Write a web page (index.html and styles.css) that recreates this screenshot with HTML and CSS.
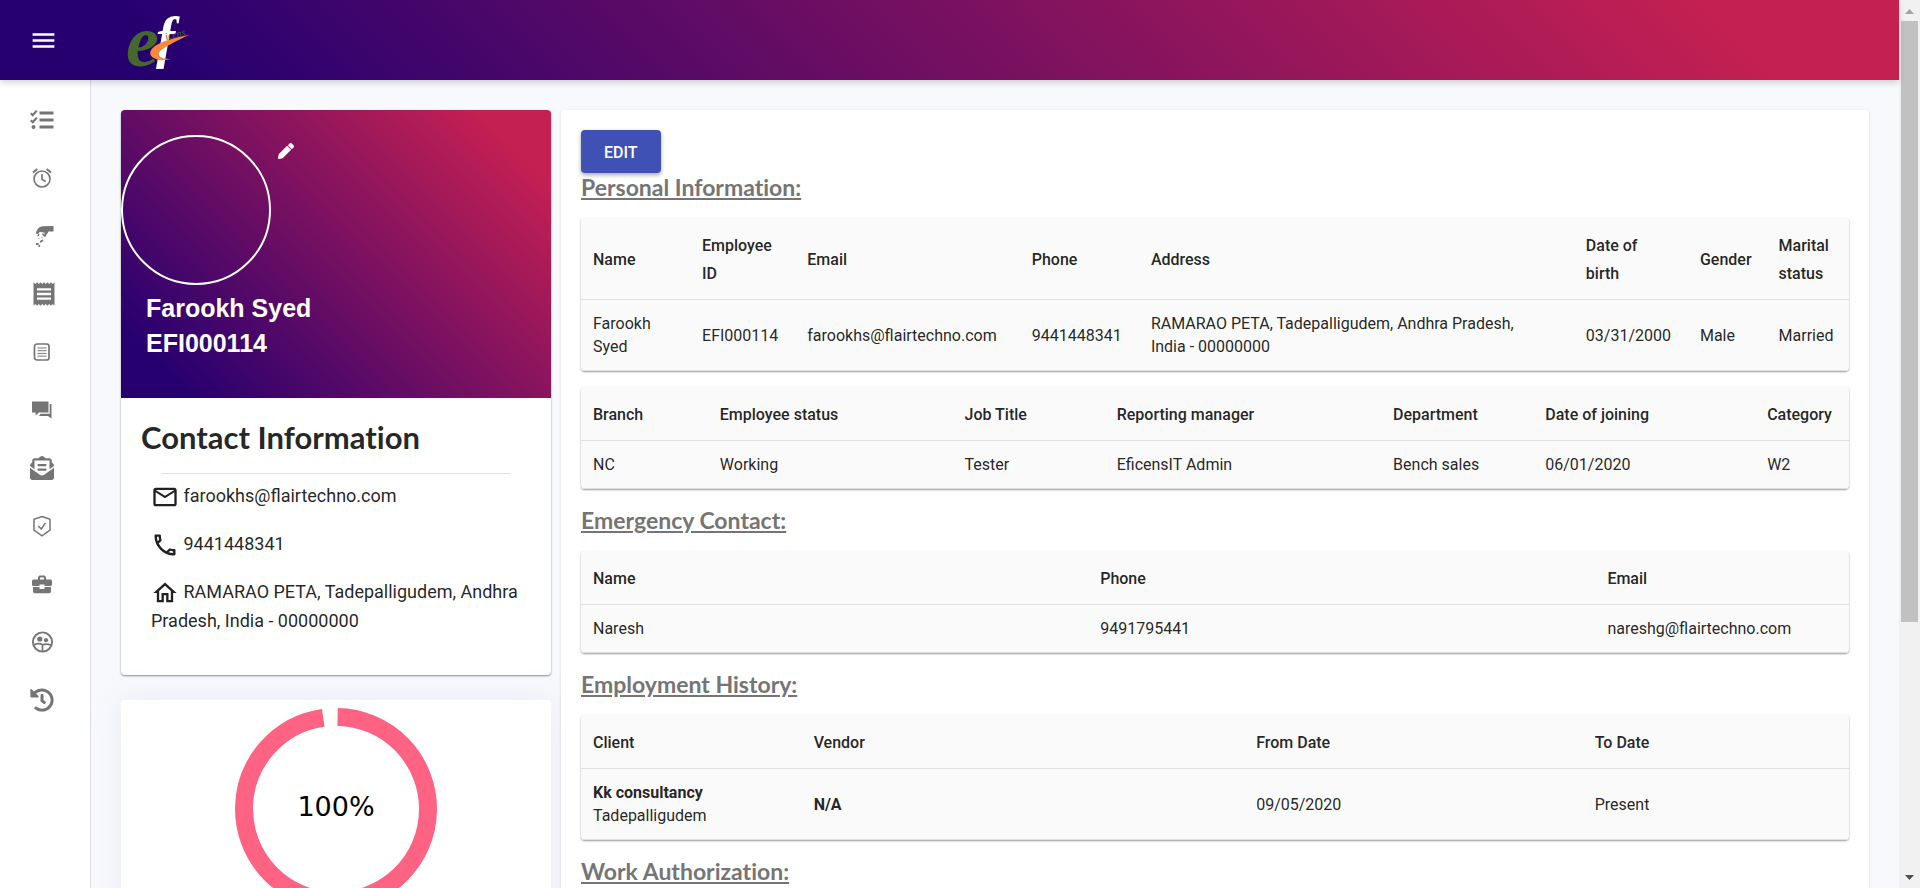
FILE: index.html
```html
<!DOCTYPE html>
<html lang="en">
<head>
<meta charset="utf-8">
<title>Employee profile</title>
<link rel="stylesheet" href="styles.css">
</head>
<body>
<div class="window">
  <div class="app">
    <header class="topbar">
      <button class="menu-button" type="button" aria-label="Open menu">
        <svg viewBox="0 0 24 24" width="29" height="29" fill="currentColor"><path d="M3 18h18v-2H3v2zm0-5h18v-2H3v2zm0-7v2h18V6H3z"/></svg>
      </button>
      <svg class="logo" viewBox="0 0 66 54" width="66" height="54" role="img" aria-label="eficens">
        <text class="logo-e" x="0" y="53">e</text>
        <text class="logo-f" x="30" y="44">f</text>
        <text class="logo-rest" x="40" y="27" transform="rotate(-14 40 27)">icens</text>
        <path fill="#f58a3c" d="M64 22C51 24 36 28 29 33c-7 5-6 11 1 13 5 2 10 1 15 0-6 0-11-1-12-4-1-4 5-7 12-11 6-3 12-7 19-9z"/>
      </svg>
    </header>
    <div class="shell">
      <nav class="sidebar" aria-label="Main">
        <a href="#tasks" aria-label="Tasks"><svg viewBox="0 0 24 24" width="24" height="24"><g fill="currentColor"><path d="M9.500 3.500h14v3h-14zM9.500 10.500h14v3h-14zM9.500 17.500h14v3h-14z"/><circle cx="3.500" cy="19" r="2"/></g><path fill="none" stroke="currentColor" stroke-width="2.200" d="M.8 5.200l2 2 4-4.600M.8 12.200l2 2 4-4.600"/></svg></a>
        <a href="#attendance" aria-label="Attendance"><svg viewBox="0 0 24 24" width="24" height="24" fill="none" stroke="currentColor" stroke-width="1.600"><circle cx="12" cy="13" r="8"/><path d="M12 8v5.300l3.600 2.200"/><path stroke-width="2" d="M3 6.500l4.400-3.600M21 6.500l-4.400-3.600"/></svg></a>
        <a href="#payroll" aria-label="Payroll"><svg viewBox="0 0 24 24" width="24" height="24" fill="currentColor"><path d="M23.500 2v5.500h-5l-3.300 5.600-1.600-.7 1.200-3.700-5-.9-1.700 2.300-2.300-.6C6.600 5.500 9 3 12.300 2.300z"/><g fill="none" stroke="currentColor"><path stroke-width="1.400" stroke-dasharray="2.500 2" d="M9 10c-1.800 2.500 0 4-.4 5M12.500 9.500c2 2 .5 3.500-.8 4.500"/><path stroke-width="1.800" d="M10 18l3-1.800M6 20h2.600M8.500 22h1.600"/></g></svg></a>
        <a href="#receipts" aria-label="Receipts"><svg viewBox="0 0 24 24" width="28" height="28" fill="currentColor"><path d="M18 17H6v-2h12v2zm0-4H6v-2h12v2zm0-4H6V7h12v2zM3 22l1.500-1.500L6 22l1.500-1.500L9 22l1.500-1.500L12 22l1.500-1.500L15 22l1.500-1.500L18 22l1.500-1.500L21 22V2l-1.500 1.500L18 2l-1.500 1.500L15 2l-1.500 1.500L12 2l-1.500 1.500L9 2 7.500 3.500 6 2 4.500 3.500 3 2v20z"/></svg></a>
        <a href="#documents" aria-label="Documents"><svg viewBox="0 0 24 24" width="24" height="24" fill="none" stroke="currentColor"><rect x="4.500" y="4" width="14.500" height="16" rx="2.500" stroke-width="1.700"/><path stroke-width="1" d="M7.500 8h9M7.500 10.700h9M7.500 13.400h9M7.500 16.100h9"/></svg></a>
        <a href="#messages" aria-label="Messages"><svg viewBox="0 0 24 24" width="24" height="24" fill="currentColor"><path d="M2 3.500h16.500v11H9l-3.500 3v-3H2z"/><path d="M19.700 6h1.800v14.500L18 18H9l1.500-2.200h9.200z"/></svg></a>
        <a href="#mail" aria-label="Mail"><svg viewBox="0 0 512 512" width="24" height="24" fill="currentColor"><path d="M176 216h160c8.840 0 16-7.160 16-16v-16c0-8.840-7.160-16-16-16H176c-8.840 0-16 7.160-16 16v16c0 8.840 7.160 16 16 16zm-16 80c0 8.840 7.160 16 16 16h160c8.840 0 16-7.160 16-16v-16c0-8.840-7.160-16-16-16H176c-8.840 0-16 7.160-16 16v16zm96 121.130c-16.420 0-32.840-5.060-46.860-15.190L0 250.860V464c0 26.510 21.490 48 48 48h416c26.510 0 48-21.490 48-48V250.860L302.860 401.940c-14.020 10.120-30.440 15.190-46.860 15.190zm237.610-254.180c-8.850-6.940-17.240-13.470-29.610-22.810V96c0-26.510-21.490-48-48-48h-77.550c-3.040-2.200-5.870-4.260-9.040-6.560C312.600 29.170 279.200-.35 256 0c-23.200-.35-56.590 29.170-73.410 41.440-3.170 2.300-6 4.360-9.040 6.560H96c-26.510 0-48 21.490-48 48v44.140c-12.370 9.330-20.760 15.870-29.610 22.810A47.995 47.995 0 0 0 0 200.720v10.650l96 69.350V96h320v184.720l96-69.350v-10.650c0-14.740-6.780-28.670-18.390-37.770z"/></svg></a>
        <a href="#insurance" aria-label="Insurance"><svg viewBox="0 0 24 24" width="24" height="24" fill="none" stroke="currentColor" stroke-width="1.500"><path d="M12 2.500l8 2.700v10.800L12 21.800 4 16V5.200z"/><path d="M8.300 12l3 3L15.500 8.800"/></svg></a>
        <a href="#jobs" aria-label="Jobs"><svg viewBox="0 0 24 24" width="24" height="24" fill="currentColor"><path d="M8 7.500V5L9.500 3.500h5L16 5v2.500h4.500A1.500 1.500 0 0 1 22 9v3.500a1.500 1.500 0 0 1-1.500 1.500H14.500v-1.500h-5V14h-6A1.500 1.500 0 0 1 2 12.500V9a1.500 1.500 0 0 1 1.500-1.500zm2 0h4v-2h-4zM3 15h6.500v2h5v-2H21v4.500a1.800 1.800 0 0 1-1.800 1.800H4.800A1.800 1.800 0 0 1 3 19.500z"/></svg></a>
        <a href="#teams" aria-label="Teams"><svg viewBox="0 0 24 24" width="24" height="24" fill="currentColor"><circle cx="12.500" cy="12" r="9.600" fill="none" stroke="currentColor" stroke-width="1.900"/><circle cx="9.800" cy="9" r="2.600"/><circle cx="16" cy="10.200" r="2.100"/><path fill="none" stroke="currentColor" stroke-width="1.700" d="M4 15c3-1.700 6-1.600 8.500-.3 3-.9 6-.5 8.500.3M12.500 14.500V21"/></svg></a>
        <a href="#history" aria-label="History"><svg viewBox="0 0 512 512" width="24" height="24" fill="currentColor"><path d="M504 255.531c.253 136.640-111.180 248.372-247.820 248.468-59.015.042-113.223-20.530-155.822-54.911-11.077-8.940-11.905-25.541-1.839-35.607l11.267-11.267c8.609-8.609 22.353-9.551 31.891-1.984C173.062 425.135 212.781 440 256 440c101.705 0 184-82.311 184-184 0-101.705-82.311-184-184-184-48.814 0-93.149 18.969-126.068 49.932l50.754 50.754c10.080 10.080 2.941 27.314-11.313 27.314H24c-8.837 0-16-7.163-16-16V38.627c0-14.254 17.234-21.393 27.314-11.314l49.372 49.372C129.209 34.136 189.552 8 256 8c136.810 0 247.747 110.780 248 247.531zm-180.912 78.784l9.823-12.630c8.138-10.463 6.253-25.542-4.210-33.679L288 256.349V152c0-13.255-10.745-24-24-24h-16c-13.255 0-24 10.745-24 24v135.651l65.409 50.874c10.463 8.137 25.541 6.253 33.679-4.210z"/></svg></a>
      </nav>
      <main class="content">
        <div class="left">
          <section class="card profile">
            <div class="banner">
              <div class="portrait-row">
                <div class="portrait"></div>
                <button class="pencil" type="button" aria-label="Change picture">
                  <svg viewBox="0 0 512 512" width="16" height="16" fill="currentColor"><path d="M497.900 142.100l-46.100 46.100c-4.700 4.700-12.300 4.700-17 0l-111-111c-4.700-4.700-4.700-12.300 0-17l46.100-46.100c18.700-18.700 49.100-18.700 67.900 0l60.100 60.100c18.800 18.700 18.800 49.100 0 67.900zM284.200 99.800L21.600 362.400.4 483.900c-2.900 16.400 11.400 30.600 27.800 27.800l121.500-21.300 262.600-262.600c4.700-4.700 4.700-12.300 0-17l-111-111c-4.800-4.700-12.400-4.700-17.100 0z"/></svg>
                </button>
              </div>
              <div class="who">Farookh Syed<br>EFI000114</div>
            </div>
            <div class="contact">
              <h2>Contact Information</h2>
              <hr>
              <p><svg viewBox="0 0 24 24" width="28" height="28" fill="currentColor"><path d="M22 6c0-1.100-.9-2-2-2H4c-1.100 0-2 .9-2 2v12c0 1.100.9 2 2 2h16c1.100 0 2-.9 2-2V6zm-2 0l-8 5-8-5h16zm0 12H4V8l8 5 8-5v10z"/></svg> farookhs@flairtechno.com</p>
              <p><svg viewBox="0 0 24 24" width="28" height="28" fill="currentColor"><path d="M6.540 5c.06.890.210 1.760.450 2.590l-1.200 1.200c-.410-1.200-.670-2.470-.760-3.790h1.510m9.860 12.020c.85.240 1.720.390 2.600.450v1.490c-1.320-.090-2.590-.350-3.800-.750l1.200-1.190M7.500 3H4c-.550 0-1 .450-1 1 0 9.390 7.610 17 17 17 .550 0 1-.450 1-1v-3.490c0-.550-.450-1-1-1-1.240 0-2.450-.200-3.570-.570-.100-.040-.210-.050-.310-.050-.260 0-.510.100-.710.290l-2.200 2.200c-2.830-1.450-5.150-3.760-6.590-6.590l2.200-2.200c.280-.280.360-.670.250-1.020C8.700 6.450 8.500 5.250 8.500 4c0-.550-.450-1-1-1z"/></svg> 9441448341</p>
              <p><svg viewBox="0 0 24 24" width="28" height="28" fill="currentColor"><path d="M12 5.690l5 4.500V18h-2v-6H9v6H7v-7.810l5-4.500M12 3L2 12h3v8h6v-6h2v6h6v-8h3L12 3z"/></svg> RAMARAO PETA, Tadepalligudem, Andhra Pradesh, India - 00000000</p>
            </div>
          </section>
          <section class="card progress">
            <svg viewBox="0 0 204 204" width="204" height="204" role="img" aria-label="Profile completion">
              <circle class="ring" cx="102" cy="102" r="92" pathLength="360" stroke-dasharray="351 9" transform="rotate(-89 102 102)"/>
              <text x="102" y="109">100%</text>
            </svg>
          </section>
        </div>
        <section class="card details">
          <button class="edit" type="button">EDIT</button>
          <h3>Personal Information:</h3>
          <table class="personal">
            <thead><tr><th>Name</th><th>Employee ID</th><th>Email</th><th>Phone</th><th>Address</th><th class="birth">Date of birth</th><th>Gender</th><th>Marital status</th></tr></thead>
            <tbody><tr><td>Farookh Syed</td><td>EFI000114</td><td>farookhs@flairtechno.com</td><td>9441448341</td><td class="address">RAMARAO PETA, Tadepalligudem, Andhra Pradesh, India - 00000000</td><td>03/31/2000</td><td>Male</td><td>Married</td></tr></tbody>
          </table>
          <table class="position">
            <thead><tr><th>Branch</th><th>Employee status</th><th>Job Title</th><th>Reporting manager</th><th>Department</th><th>Date of joining</th><th>Category</th></tr></thead>
            <tbody><tr><td>NC</td><td>Working</td><td>Tester</td><td>EficensIT Admin</td><td>Bench sales</td><td>06/01/2020</td><td>W2</td></tr></tbody>
          </table>
          <h3>Emergency Contact:</h3>
          <table class="emergency">
            <thead><tr><th>Name</th><th>Phone</th><th>Email</th></tr></thead>
            <tbody><tr><td>Naresh</td><td>9491795441</td><td>nareshg@flairtechno.com</td></tr></tbody>
          </table>
          <h3>Employment History:</h3>
          <table class="employment">
            <thead><tr><th>Client</th><th>Vendor</th><th>From Date</th><th>To Date</th></tr></thead>
            <tbody><tr><td><b>Kk consultancy</b><br>Tadepalligudem</td><td><b>N/A</b></td><td>09/05/2020</td><td>Present</td></tr></tbody>
          </table>
          <h3>Work Authorization:</h3>
        </section>
      </main>
    </div>
  </div>
  <div class="scrollbar" aria-hidden="true">
    <svg viewBox="0 0 21 21" width="21" height="21"><path fill="#a3a3a3" d="M6 14h9l-4.500-5z"/></svg>
    <div class="track"><div class="thumb"></div></div>
    <svg viewBox="0 0 21 20" width="21" height="20"><path fill="#505050" d="M6 7h9l-4.500 5z"/></svg>
  </div>
</div>
</body>
</html>
```
FILE: styles.css
```css
* { box-sizing: border-box; }
body {
  margin: 0;
  font: 16px/23px Roboto, "Liberation Sans", sans-serif;
  color: rgba(0, 0, 0, .87);
  background: #f7f9fd;
}
button { border: 0; padding: 0; background: none; color: inherit; font: inherit; cursor: pointer; }
svg { display: block; flex: none; }

.window { display: flex; height: 100vh; overflow: hidden; }
.app { flex: 1; min-width: 0; display: flex; flex-direction: column; }

.topbar {
  flex: none;
  height: 80px;
  padding: 0 29px;
  display: flex;
  align-items: center;
  gap: 68px;
  color: #fff;
  background: linear-gradient(45deg, #270070 10%, #c42052 90%);
  box-shadow: 0 3px 6px rgba(0, 0, 0, .16);
  z-index: 1;
}
.logo { overflow: visible; font-family: "Liberation Serif", serif; font-style: italic; font-weight: bold; }
.logo-e { font-size: 74px; fill: #46682c; }
.logo-f { font-size: 57px; fill: #fff; }
.logo-rest { font-size: 10px; font-weight: normal; fill: #46682c; }

.shell { flex: 1; min-height: 0; display: flex; }
.sidebar {
  flex: none;
  width: 91px;
  padding: 11px 0 0 30px;
  border-right: 1px solid #dcdee2;
  background: #fff;
  color: #757575;
}
.sidebar a { display: flex; align-items: center; height: 58px; color: inherit; }

.content { flex: 1; min-width: 0; padding: 30px 30px 0; display: flex; gap: 10px; align-items: flex-start; }
.left { flex: none; width: 430px; display: flex; flex-direction: column; gap: 25px; }
.card { border-radius: 4px; background: #fff; }

.profile { overflow: hidden; box-shadow: 0 1px 2px rgba(0, 0, 0, .45); }
.banner {
  height: 288px;
  padding-top: 25px;
  color: #fff;
  background: linear-gradient(45deg, #270070 10%, #c42052 90%);
}
.portrait-row { display: flex; gap: 7px; }
.portrait { width: 150px; height: 150px; border: 2px solid #fff; border-radius: 50%; }
.pencil { align-self: flex-start; padding-top: 8px; }
.who { padding: 6px 25px 0; font: bold 25px/35px "Liberation Sans", Arial, sans-serif; }

.contact { padding: 19px 20px 21px; }
.contact h2 { margin: 0; font: bold 31px/40px Lato, sans-serif; font-variant-ligatures: none; }
.contact hr { width: 350px; max-width: 100%; margin: 16px auto 8px; border: 0; border-top: 1px solid #e0e0e0; }
.contact p { margin: 0 10px 19px; font-size: 18px; line-height: 28px; }
.contact p svg { display: inline-block; vertical-align: -9px; }

.progress { padding-top: 7px; height: 240px; display: flex; justify-content: center; box-shadow: 0 0 35px rgba(154, 161, 171, .15); }
.ring { fill: none; stroke: #ff6384; stroke-width: 18; }
.progress text { font: 27px "DejaVu Sans", Verdana, sans-serif; text-anchor: middle; fill: #000; }

.details { flex: 1; min-width: 0; min-height: 778px; padding: 20px; box-shadow: 0 1px 3px rgba(0, 0, 0, .15); }
.edit {
  display: block;
  padding: 11px 23px 9px;
  border-radius: 4px;
  background: #3f51b5;
  color: #fff;
  font-weight: 500;
  box-shadow: 0 2px 4px rgba(0, 0, 0, .35);
}
h3 {
  margin: 17px 0;
  font: bold 23px/28px Lato, sans-serif;
  font-variant-ligatures: none;
  color: #757575;
  text-decoration: underline;
}
.edit + h3 { margin-top: 0; }

table {
  width: 100%;
  table-layout: fixed;
  border-spacing: 0;
  border-radius: 4px;
  background: #fafafa;
  box-shadow: 0 1px 2px rgba(0, 0, 0, .4);
}
table + table { margin-top: 16px; }
th, td { padding: 12px; text-align: left; vertical-align: middle; border-bottom: 1px solid #e0e0e0; }
th { padding: 14px 12px 11px; font-weight: 500; line-height: 28px; }
td b { font-weight: 700; }
td.address, th.birth { padding-right: 24px; }

.personal th:nth-child(1) { width: 8.6%; }
.personal th:nth-child(2) { width: 8.3%; }
.personal th:nth-child(3) { width: 17.7%; }
.personal th:nth-child(4) { width: 9.4%; }
.personal th:nth-child(5) { width: 34.3%; }
.personal th:nth-child(6) { width: 9%; }
.personal th:nth-child(7) { width: 6.2%; }
.personal th:nth-child(8) { width: 6.5%; }
.position th:nth-child(1) { width: 10%; }
.position th:nth-child(2) { width: 19.3%; }
.position th:nth-child(3) { width: 12%; }
.position th:nth-child(4) { width: 21.8%; }
.position th:nth-child(5) { width: 12%; }
.position th:nth-child(6) { width: 17.5%; }
.position th:nth-child(7) { width: 7.4%; }
.emergency th:nth-child(1), .emergency th:nth-child(2) { width: 40%; }
.employment th:nth-child(1) { width: 17.4%; }
.employment th:nth-child(2) { width: 34.9%; }
.employment th:nth-child(3) { width: 26.7%; }

.scrollbar { flex: none; width: 21px; display: flex; flex-direction: column; background: #f1f1f1; }
.track { flex: 1; padding: 0 2px; }
.thumb { height: 71%; background: #c1c1c1; }
```
